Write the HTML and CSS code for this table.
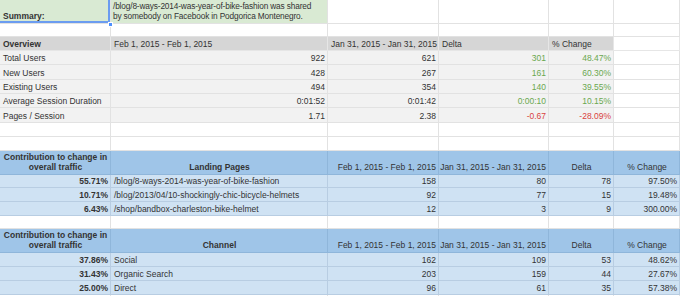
FILE: index.html
```html
<!DOCTYPE html>
<html>
<head>
<meta charset="utf-8">
<link rel="stylesheet" href="styles.css">
</head>
<body>
<div class="sheet">
  <div class="row h24">
    <div class="c green b sel">Summary:<span class="handle"></span></div>
    <div class="c green summary">/blog/8-ways-2014-was-year-of-bike-fashion was shared<br>by somebody on Facebook in Podgorica Montenegro.</div>
    <div class="c"></div><div class="c"></div><div class="c"></div><div class="c"></div>
  </div>
  <div class="row h13"><div class="c"></div><div class="c"></div><div class="c"></div><div class="c"></div><div class="c"></div><div class="c"></div></div>
  <div class="row h14 ovh">
    <div class="c b">Overview</div>
    <div class="c">Feb 1, 2015 - Feb 1, 2015</div>
    <div class="c">Jan 31, 2015 - Jan 31, 2015</div>
    <div class="c">Delta</div>
    <div class="c">% Change</div>
    <div class="c white"></div>
  </div>
  <div class="row h14 ov">
    <div class="c">Total Users</div><div class="c r">922</div><div class="c r">621</div><div class="c r pos">301</div><div class="c r pos">48.47%</div><div class="c white"></div>
  </div>
  <div class="row h15 ov">
    <div class="c">New Users</div><div class="c r">428</div><div class="c r">267</div><div class="c r pos">161</div><div class="c r pos">60.30%</div><div class="c white"></div>
  </div>
  <div class="row h14 ov">
    <div class="c">Existing Users</div><div class="c r">494</div><div class="c r">354</div><div class="c r pos">140</div><div class="c r pos">39.55%</div><div class="c white"></div>
  </div>
  <div class="row h14 ov">
    <div class="c">Average Session Duration</div><div class="c r">0:01:52</div><div class="c r">0:01:42</div><div class="c r pos">0:00:10</div><div class="c r pos">10.15%</div><div class="c white"></div>
  </div>
  <div class="row h15 ov">
    <div class="c">Pages / Session</div><div class="c r">1.71</div><div class="c r">2.38</div><div class="c r neg">-0.67</div><div class="c r neg">-28.09%</div><div class="c white"></div>
  </div>
  <div class="row h14"><div class="c"></div><div class="c"></div><div class="c"></div><div class="c"></div><div class="c"></div><div class="c"></div></div>
  <div class="row h14"><div class="c"></div><div class="c"></div><div class="c"></div><div class="c"></div><div class="c"></div><div class="c"></div></div>

  <div class="row h24 bh">
    <div class="c b ctr wrap">Contribution to change in overall traffic</div>
    <div class="c b ctr">Landing Pages</div>
    <div class="c r">Feb 1, 2015 - Feb 1, 2015</div>
    <div class="c r">Jan 31, 2015 - Jan 31, 2015</div>
    <div class="c ctr">Delta</div>
    <div class="c ctr">% Change</div>
  </div>
  <div class="row h13 bd">
    <div class="c r b">55.71%</div><div class="c">/blog/8-ways-2014-was-year-of-bike-fashion</div><div class="c r">158</div><div class="c r">80</div><div class="c r">78</div><div class="c r">97.50%</div>
  </div>
  <div class="row h14 bd">
    <div class="c r b">10.71%</div><div class="c">/blog/2013/04/10-shockingly-chic-bicycle-helmets</div><div class="c r">92</div><div class="c r">77</div><div class="c r">15</div><div class="c r">19.48%</div>
  </div>
  <div class="row h14 bd">
    <div class="c r b">6.43%</div><div class="c">/shop/bandbox-charleston-bike-helmet</div><div class="c r">12</div><div class="c r">3</div><div class="c r">9</div><div class="c r">300.00%</div>
  </div>
  <div class="row h13"><div class="c"></div><div class="c"></div><div class="c"></div><div class="c"></div><div class="c"></div><div class="c"></div></div>

  <div class="row h24 bh">
    <div class="c b ctr wrap">Contribution to change in overall traffic</div>
    <div class="c b ctr">Channel</div>
    <div class="c r">Feb 1, 2015 - Feb 1, 2015</div>
    <div class="c r">Jan 31, 2015 - Jan 31, 2015</div>
    <div class="c ctr">Delta</div>
    <div class="c ctr">% Change</div>
  </div>
  <div class="row h14 bd">
    <div class="c r b">37.86%</div><div class="c">Social</div><div class="c r">162</div><div class="c r">109</div><div class="c r">53</div><div class="c r">48.62%</div>
  </div>
  <div class="row h14 bd">
    <div class="c r b">31.43%</div><div class="c">Organic Search</div><div class="c r">203</div><div class="c r">159</div><div class="c r">44</div><div class="c r">27.67%</div>
  </div>
  <div class="row h14 bd">
    <div class="c r b">25.00%</div><div class="c">Direct</div><div class="c r">96</div><div class="c r">61</div><div class="c r">35</div><div class="c r">57.38%</div>
  </div>
  <div class="row h14"><div class="c"></div><div class="c"></div><div class="c"></div><div class="c"></div><div class="c"></div><div class="c"></div></div>
</div>
</body>
</html>
```

FILE: styles.css
```css
html, body {
  margin: 0;
  padding: 0;
  background: #ffffff;
}
.sheet {
  width: 680px;
  height: 296px;
  overflow: hidden;
  font-family: "Liberation Sans", Arial, sans-serif;
  font-size: 8.5px;
  line-height: 10px;
  color: #333333;
}
.row {
  display: grid;
  grid-template-columns: 111px 217px 111px 110px 65px 66px;
}
.h13 { height: 13px; }
.h14 { height: 14px; }
.h15 { height: 15px; }
.h24 { height: 24px; }
.c {
  box-sizing: border-box;
  border-right: 1px solid #e2e2e2;
  border-bottom: 1px solid #e2e2e2;
  display: flex;
  align-items: flex-end;
  padding: 0 2px 1px 3px;
  white-space: nowrap;
  overflow: visible;
  position: relative;
}
.r { justify-content: flex-end; padding-right: 2px; }
.ctr { justify-content: center; text-align: center; }
.b { font-weight: bold; }
.wrap { white-space: normal; }
.green { background: #d9ead3; padding-bottom: 2px; }
.summary { font-size: 8.3px; letter-spacing: -0.15px; padding-left: 2px; }
.sel { box-shadow: inset 0 -2px 0 #6b9cf0, inset -2px 0 0 #6b9cf0; }
.handle {
  position: absolute;
  right: -3px;
  bottom: -4px;
  width: 5px;
  height: 5px;
  background: #4d90fe;
  border: 1px solid #ffffff;
  box-sizing: border-box;
  z-index: 2;
}
.ovh .c { background: #d6d6d6; border-color: #e6e6e6; }
.ov .c { background: #f2f2f2; }
.ovh .white, .ov .white { background: #ffffff; }
.pos { color: #6aa84f; }
.neg { color: #d9423f; }
.bh .c { background: #9fc5e8; border-color: #8fb6da; padding-bottom: 2px; }
.bd .c { background: #cfe2f3; border-color: #b8cde2; }
```
